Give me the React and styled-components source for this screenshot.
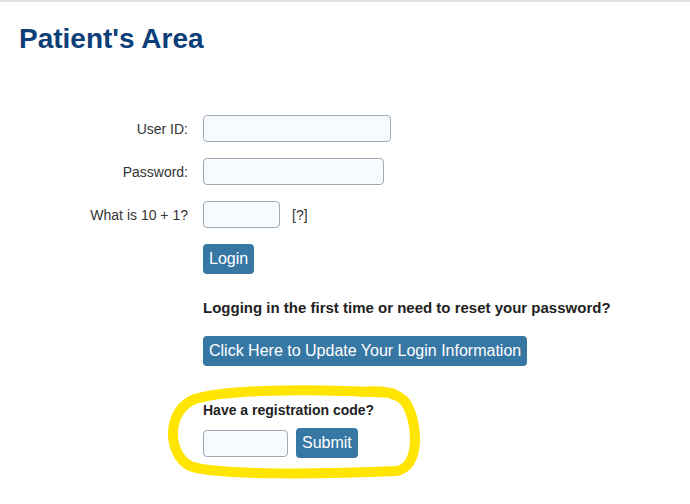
import React from "react";
import styled, { createGlobalStyle } from "styled-components";

const GlobalStyle = createGlobalStyle`
  html, body {
    margin: 0;
    padding: 0;
    background: #ffffff;
  }
  body {
    font-family: "Liberation Sans", Arial, sans-serif;
    color: #333333;
  }
`;

const Page = styled.div`
  position: relative;
  width: 690px;
  height: 504px;
  border-top: 2px solid #dde1e6;
  box-sizing: border-box;
  overflow: hidden;
`;

const Title = styled.h1`
  margin: 0;
  padding: 20px 0 0 19px;
  font-size: 28px;
  line-height: 34px;
  font-weight: bold;
  color: #0c3e78;
`;

const Form = styled.div`
  display: grid;
  grid-template-columns: 169px 1fr;
  column-gap: 15px;
  row-gap: 16px;
  align-items: center;
  padding: 59px 0 0 19px;
`;

const Label = styled.label`
  text-align: right;
  font-size: 14px;
  color: #333333;
`;

const Field = styled.div`
  display: flex;
  align-items: center;
  gap: ${(p) => p.gap || 0}px;
`;

const Input = styled.input`
  box-sizing: border-box;
  width: ${(p) => p.w}px;
  height: 27px;
  border: 1px solid #9eaab5;
  border-radius: 4px;
  background: #f8fbfe;
  padding: 0 6px;
  font-size: 14px;
  outline: none;
`;

const Help = styled.span`
  font-size: 14px;
  color: #333333;
`;

const Button = styled.button`
  box-sizing: border-box;
  height: 30px;
  padding: 0 6px;
  border: none;
  border-radius: 4px;
  background: #3777a4;
  color: #ffffff;
  font-family: "Liberation Sans", Arial, sans-serif;
  font-size: 16px;
  cursor: pointer;
`;

const Section = styled.div`
  grid-column: 2;
  margin-top: ${(p) => p.top || 0}px;
`;

const Note = styled.p`
  margin: 0;
  font-size: ${(p) => p.size || 14}px;
  font-weight: bold;
  color: #222222;
`;

const CodeRow = styled.div`
  display: flex;
  align-items: center;
  gap: 8px;
  margin-top: 10px;
`;

const Highlight = styled.svg`
  position: absolute;
  left: 0;
  top: 0;
  pointer-events: none;
`;

export default function App() {
  return (
    <>
      <GlobalStyle />
      <Page>
        <Title>Patient's Area</Title>
        <Form>
          <Label>User ID:</Label>
          <Field>
            <Input w={188} type="text" />
          </Field>
          <Label>Password:</Label>
          <Field>
            <Input w={181} type="password" />
          </Field>
          <Label>What is 10 + 1?</Label>
          <Field gap={12}>
            <Input w={77} type="text" />
            <Help>[?]</Help>
          </Field>
          <Section>
            <Button>Login</Button>
          </Section>
          <Section top={9}>
            <Note size={15}>Logging in the first time or need to reset your password?</Note>
          </Section>
          <Section top={4}>
            <Button>Click Here to Update Your Login Information</Button>
          </Section>
          <Section top={20}>
            <Note>Have a registration code?</Note>
            <CodeRow>
              <Input w={85} type="text" />
              <Button>Submit</Button>
            </CodeRow>
          </Section>
        </Form>
        <Highlight width="690" height="504" viewBox="0 0 690 504">
          <path
            d="M 392 391 C 300 386 225 388 195 397 C 166 408 167 452 190 464 C 217 474 330 472 396 469 C 421 466 418 420 406 401 C 398 390 382 388 360 390"
            fill="none"
            stroke="#ffe500"
            strokeWidth="10"
            strokeLinecap="round"
            strokeLinejoin="round"
          />
        </Highlight>
      </Page>
    </>
  );
}
